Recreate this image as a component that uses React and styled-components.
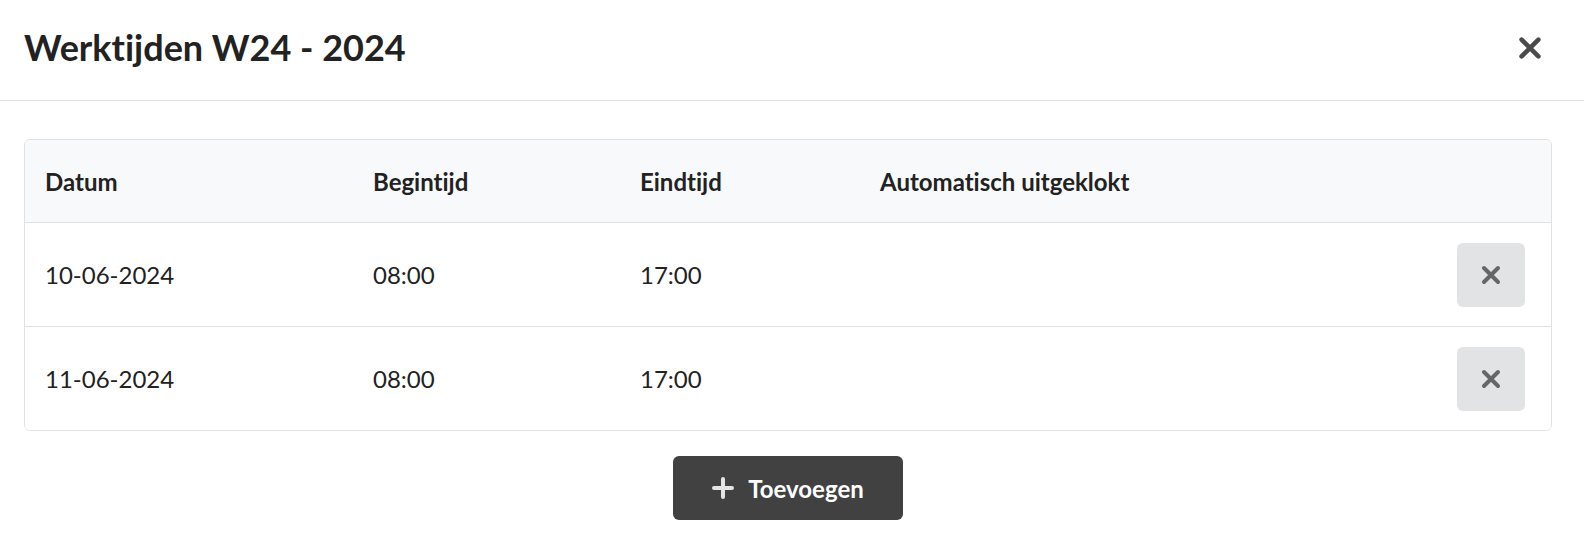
import React from 'react';
import styled, { createGlobalStyle } from 'styled-components';

const GlobalStyle = createGlobalStyle`
  *, *::before, *::after {
    box-sizing: border-box;
  }

  html, body {
    margin: 0;
    padding: 0;
    background: #ffffff;
    overflow: hidden;
  }

  body {
    font-family: Lato, 'Open Sans', sans-serif;
    font-variant-ligatures: none;
    color: #222222;
  }
`;

const COLUMNS = '328px 267px 240px 1fr 94px';

const Modal = styled.div`
  width: 100%;
  display: flex;
  flex-direction: column;
`;

const Header = styled.div`
  height: 101px;
  padding: 0 24px;
  display: flex;
  align-items: center;
  justify-content: space-between;
  border-bottom: 1px solid #e2e2e2;
`;

const Title = styled.h1`
  margin: 0 0 6px 0;
  font-size: 36px;
  font-weight: 700;
  color: #222222;
`;

const CloseButton = styled.button`
  border: none;
  background: none;
  padding: 0;
  margin-right: 18px;
  margin-bottom: 4px;
  display: flex;
  cursor: pointer;
`;

const Body = styled.div`
  padding: 38px 32px 0 24px;
  display: flex;
  flex-direction: column;
  align-items: center;
`;

const Table = styled.div`
  width: 100%;
  border: 1px solid #e0e1e3;
  border-radius: 6px;
  overflow: hidden;
`;

const Row = styled.div`
  display: grid;
  grid-template-columns: ${COLUMNS};
  align-items: center;
  padding-left: 20px;
  height: ${({ head }) => (head ? '82px' : '104px')};
  background: ${({ head }) => (head ? '#f8f9fb' : '#ffffff')};
  border-top: ${({ first }) => (first ? 'none' : '1px solid #e0e1e3')};
  font-size: 24px;
  font-weight: ${({ head }) => (head ? 700 : 400)};
`;

const Cell = styled.div`
  white-space: nowrap;
`;

const ActionCell = styled.div`
  display: flex;
  justify-content: flex-start;
`;

const DeleteButton = styled.button`
  width: 68px;
  height: 64px;
  border: none;
  border-radius: 6px;
  background: #e2e3e5;
  display: flex;
  align-items: center;
  justify-content: center;
  cursor: pointer;
`;

const AddButton = styled.button`
  margin-top: 25px;
  width: 230px;
  height: 64px;
  border: none;
  border-radius: 6px;
  background: #414141;
  color: #ffffff;
  font-family: Lato, sans-serif;
  font-size: 24px;
  font-weight: 700;
  display: flex;
  align-items: center;
  justify-content: center;
  gap: 14px;
  cursor: pointer;
`;

const Cross = ({ size, color, weight }) => (
  <svg width={size} height={size} viewBox="0 0 20 20">
    <path
      d="M3 3 L17 17 M17 3 L3 17"
      stroke={color}
      strokeWidth={weight}
      strokeLinecap="round"
    />
  </svg>
);

const Plus = () => (
  <svg width="22" height="22" viewBox="0 0 22 22">
    <path
      d="M11 2 V20 M2 11 H20"
      stroke="#e4e4e4"
      strokeWidth="4"
      strokeLinecap="round"
    />
  </svg>
);

const ROWS = [
  { date: '10-06-2024', start: '08:00', end: '17:00', auto: '' },
  { date: '11-06-2024', start: '08:00', end: '17:00', auto: '' },
];

const App = () => (
  <>
    <GlobalStyle />
    <Modal>
      <Header>
        <Title>Werktijden W24 - 2024</Title>
        <CloseButton aria-label="Sluiten">
          <Cross size={24} color="#4a4a4a" weight={3.8} />
        </CloseButton>
      </Header>

      <Body>
        <Table>
          <Row head first>
            <Cell>Datum</Cell>
            <Cell>Begintijd</Cell>
            <Cell>Eindtijd</Cell>
            <Cell>Automatisch uitgeklokt</Cell>
            <Cell />
          </Row>
          {ROWS.map((row) => (
            <Row key={row.date}>
              <Cell>{row.date}</Cell>
              <Cell>{row.start}</Cell>
              <Cell>{row.end}</Cell>
              <Cell>{row.auto}</Cell>
              <ActionCell>
                <DeleteButton aria-label="Verwijderen">
                  <Cross size={20} color="#666666" weight={4} />
                </DeleteButton>
              </ActionCell>
            </Row>
          ))}
        </Table>

        <AddButton>
          <Plus />
          Toevoegen
        </AddButton>
      </Body>
    </Modal>
  </>
);

export default App;
